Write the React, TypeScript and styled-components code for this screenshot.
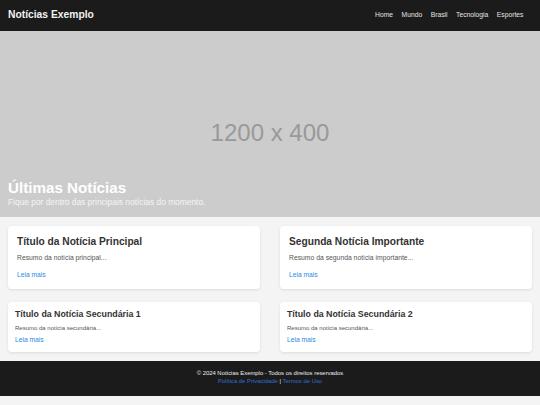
import React from 'react';
import styled, { createGlobalStyle } from 'styled-components';

const GlobalStyle = createGlobalStyle`
  html, body {
    margin: 0;
    padding: 0;
    background: #f4f4f4;
    font-family: "Liberation Sans", Arial, sans-serif;
  }
  * { box-sizing: border-box; }
`;

const Header = styled.header`
  height: 31px;
  background: #1b1b1b;
  display: flex;
  align-items: center;
  justify-content: space-between;
  padding: 0 16.5px 0 8px;
`;

const Brand = styled.h1`
  margin: 0;
  color: #f2f2f2;
  font-size: 10.3px;
  font-weight: 700;
  line-height: 1;
`;

const Nav = styled.nav`
  display: flex;
  gap: 8.5px;
`;

const NavLink = styled.a`
  color: #e4e4e4;
  font-size: 6.75px;
  text-decoration: none;
  line-height: 1;
`;

const Hero = styled.section`
  position: relative;
  height: 186px;
  overflow: hidden;
  background: #cccccc;
`;

const Placeholder = styled.div`
  height: 204px;
  display: flex;
  align-items: center;
  justify-content: center;
  color: #999999;
  font-size: 24px;
`;

const Caption = styled.div`
  position: absolute;
  left: 8px;
  bottom: 10px;
  display: flex;
  flex-direction: column;
`;

const HeroTitle = styled.h2`
  margin: 0;
  color: #ffffff;
  font-size: 15.2px;
  font-weight: 700;
  line-height: 18px;
`;

const HeroText = styled.p`
  margin: 0;
  color: #f4f4f4;
  font-size: 8.4px;
  line-height: 10px;
`;

const Main = styled.main`
  padding: 9px 8px;
  display: flex;
  flex-direction: column;
  gap: 13px;
`;

const Grid = styled.div`
  display: grid;
  grid-template-columns: 1fr 1fr;
  gap: 20px;
`;

const Card = styled.article<{ $small?: boolean }>`
  background: #ffffff;
  border-radius: 4px;
  box-shadow: 0 1px 3px rgba(0, 0, 0, 0.1);
  padding: ${p => (p.$small ? '6px 7px 7.5px' : '8.5px 9px 9.2px')};
  display: flex;
  flex-direction: column;
`;

const CardTitle = styled.h3<{ $small?: boolean }>`
  margin: 0;
  color: #333333;
  font-weight: 700;
  font-size: ${p => (p.$small ? '8.8px' : '10.2px')};
  line-height: ${p => (p.$small ? '12px' : '14px')};
`;

const Summary = styled.p<{ $small?: boolean }>`
  margin: ${p => (p.$small ? '3.8px 0 0' : '4.3px 0 0')};
  color: #555555;
  font-size: ${p => (p.$small ? '6px' : '6.8px')};
  line-height: ${p => (p.$small ? '9px' : '10px')};
`;

const More = styled.a<{ $small?: boolean }>`
  margin-top: ${p => (p.$small ? '2.7px' : '7px')};
  color: #2a8ae2;
  font-size: 6.7px;
  line-height: ${p => (p.$small ? '9px' : '10px')};
  text-decoration: none;
`;

const Footer = styled.footer`
  background: #1b1b1b;
  color: #eeeeee;
  text-align: center;
  padding: 9.5px 0 11px;
  font-size: 5.9px;
  line-height: 7.5px;
`;

const FooterLine = styled.p`
  margin: 0;
`;

const FooterLink = styled.a`
  color: #2f72d6;
  text-decoration: none;
`;

const navItems = ['Home', 'Mundo', 'Brasil', 'Tecnologia', 'Esportes'];

const featured = [
  { title: 'Título da Notícia Principal', summary: 'Resumo da notícia principal...' },
  { title: 'Segunda Notícia Importante', summary: 'Resumo da segunda notícia importante...' },
];

const secondary = [
  { title: 'Título da Notícia Secundária 1', summary: 'Resumo da notícia secundária...' },
  { title: 'Título da Notícia Secundária 2', summary: 'Resumo da notícia secundária...' },
];

const App: React.FC = () => (
  <>
    <GlobalStyle />
    <Header>
      <Brand>Notícias Exemplo</Brand>
      <Nav>
        {navItems.map(item => (
          <NavLink key={item} href="#">{item}</NavLink>
        ))}
      </Nav>
    </Header>
    <Hero>
      <Placeholder>1200 x 400</Placeholder>
      <Caption>
        <HeroTitle>Últimas Notícias</HeroTitle>
        <HeroText>Fique por dentro das principais notícias do momento.</HeroText>
      </Caption>
    </Hero>
    <Main>
      <Grid>
        {featured.map(n => (
          <Card key={n.title}>
            <CardTitle>{n.title}</CardTitle>
            <Summary>{n.summary}</Summary>
            <More href="#">Leia mais</More>
          </Card>
        ))}
      </Grid>
      <Grid>
        {secondary.map(n => (
          <Card key={n.title} $small>
            <CardTitle $small>{n.title}</CardTitle>
            <Summary $small>{n.summary}</Summary>
            <More href="#" $small>Leia mais</More>
          </Card>
        ))}
      </Grid>
    </Main>
    <Footer>
      <FooterLine>© 2024 Notícias Exemplo - Todos os direitos reservados</FooterLine>
      <FooterLine>
        <FooterLink href="#">Política de Privacidade</FooterLink> | <FooterLink href="#">Termos de Uso</FooterLink>
      </FooterLine>
    </Footer>
  </>
);

export default App;
